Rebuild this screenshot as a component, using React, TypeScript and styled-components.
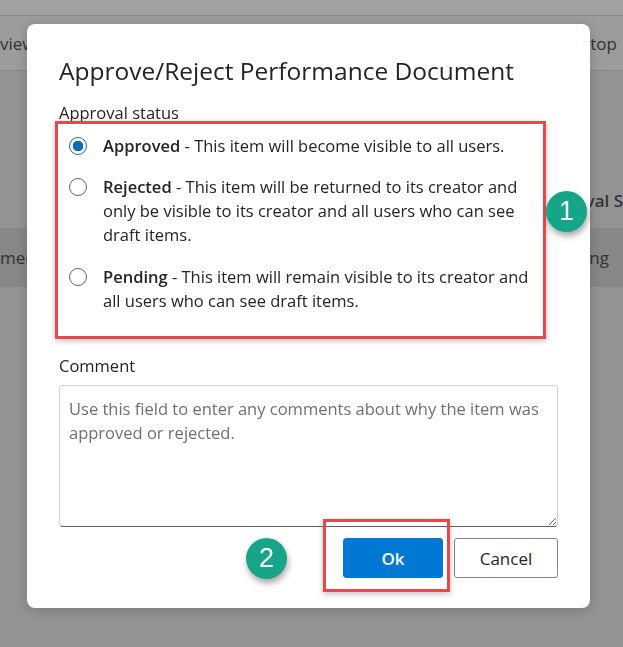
import styled, { createGlobalStyle } from "styled-components";

const GlobalStyle = createGlobalStyle`
  html, body {
    margin: 0;
    padding: 0;
    height: 100%;
  }
  body {
    font-family: "Open Sans", "Noto Sans", "Liberation Sans", sans-serif;
    background: #939393;
    color: #242424;
    overflow: hidden;
  }
`;

const options = [
  {
    id: "approved",
    label: "Approved",
    text: "This item will become visible to all users.",
  },
  {
    id: "rejected",
    label: "Rejected",
    text: "This item will be returned to its creator and only be visible to its creator and all users who can see draft items.",
  },
  {
    id: "pending",
    label: "Pending",
    text: "This item will remain visible to its creator and all users who can see draft items.",
  },
];

const App = () => {
  return (
    <>
      <GlobalStyle />
      <Page>
        <TopStrip />
        <CommandBar>
          <BgText>view</BgText>
          <BgText>top</BgText>
        </CommandBar>
        <ListHeader>
          <BgText $bold>oval S</BgText>
        </ListHeader>
        <ListRow>
          <BgText>ment</BgText>
          <BgText>ng</BgText>
        </ListRow>
      </Page>

      <Overlay>
        <Dialog>
          <Title>Approve/Reject Performance Document</Title>
          <FieldLabel>Approval status</FieldLabel>
          <RadioGroup>
            {options.map((opt) => (
              <Option key={opt.id}>
                <Radio $checked={opt.id === "approved"} />
                <OptionText>
                  <strong>{opt.label}</strong> - {opt.text}
                </OptionText>
              </Option>
            ))}
          </RadioGroup>
          <FieldLabel $top={15}>Comment</FieldLabel>
          <CommentBox placeholder="Use this field to enter any comments about why the item was approved or rejected." />
          <Actions>
            <HighlightWrap>
              <Highlight />
              <PrimaryButton>Ok</PrimaryButton>
            </HighlightWrap>
            <SecondaryButton>Cancel</SecondaryButton>
          </Actions>
          <Badge $x={519} $y={167}>1</Badge>
          <Badge $x={219} $y={514}>2</Badge>
        </Dialog>
      </Overlay>
    </>
  );
};

const Page = styled.div`
  height: 100vh;
  display: flex;
  flex-direction: column;
  background: #939393;
`;

const TopStrip = styled.div`
  height: 15px;
  background: #a1a1a1;
  border-bottom: 1px solid #8b8b8b;
`;

const CommandBar = styled.div`
  height: 54px;
  background: #9c9c9c;
  border-bottom: 1px solid #888888;
  display: flex;
  justify-content: space-between;
  align-items: center;
  padding: 0 6px 0 0;
`;

const ListHeader = styled.div`
  margin-top: 114px;
  height: 30px;
  display: flex;
  justify-content: flex-end;
  align-items: center;
`;

const ListRow = styled.div`
  margin-top: 13px;
  height: 59px;
  background: #878787;
  display: flex;
  justify-content: space-between;
  align-items: center;
  padding-right: 14px;
`;

const BgText = styled.span<{ $bold?: boolean }>`
  font-size: 17px;
  color: #333333;
  font-weight: ${(p) => (p.$bold ? 600 : 400)};
  white-space: nowrap;
`;

const Overlay = styled.div`
  position: fixed;
  inset: 0;
  padding: 24px 0 0 27px;
`;

const Dialog = styled.div`
  position: relative;
  box-sizing: border-box;
  width: 563px;
  height: 584px;
  background: #ffffff;
  border-radius: 8px;
  padding: 31px 32px 30px;
  display: flex;
  flex-direction: column;
  box-shadow: 0 2px 12px rgba(0, 0, 0, 0.18);
`;

const Title = styled.h1`
  margin: 0;
  font-size: 24.5px;
  line-height: 32px;
  font-weight: 500;
  color: #242424;
`;

const FieldLabel = styled.div<{ $top?: number }>`
  margin-top: ${(p) => p.$top ?? 14}px;
  font-size: 16.5px;
  line-height: 24px;
  color: #242424;
`;

const RadioGroup = styled.div`
  margin: -4px 0 0 -4px;
  width: 491px;
  box-sizing: border-box;
  border: 3px solid #e5484d;
  box-shadow: 0 2px 6px rgba(0, 0, 0, 0.25);
  padding: 10px 8px 23px 8px;
  display: flex;
  flex-direction: column;
  gap: 17px;
  position: relative;
  z-index: 1;
`;

const Option = styled.label`
  display: flex;
  align-items: flex-start;
  gap: 16px;

  & + & + & {
    margin-top: 1px;
  }
`;

const Radio = styled.span<{ $checked: boolean }>`
  flex: none;
  width: 18px;
  height: 18px;
  margin: 3px 0 0 3px;
  box-sizing: border-box;
  border-radius: 50%;
  border: 1px solid ${(p) => (p.$checked ? "#0f6cbd" : "#616161")};
  background: ${(p) =>
    p.$checked
      ? "radial-gradient(circle, #0f6cbd 0 5px, #ffffff 5.5px)"
      : "#ffffff"};
`;

const OptionText = styled.span`
  font-size: 16.5px;
  line-height: 24px;
  color: #242424;

  strong {
    font-weight: 600;
  }
`;

const CommentBox = styled.textarea`
  margin-top: 7px;
  height: 144px;
  box-sizing: border-box;
  width: 100%;
  resize: vertical;
  border: 1px solid #d1d1d1;
  border-bottom-color: #616161;
  border-radius: 4px;
  padding: 11px 9px;
  font-family: inherit;
  font-size: 16.5px;
  line-height: 24px;
  color: #242424;
  outline: none;

  &::placeholder {
    color: #707070;
  }
`;

const Actions = styled.div`
  margin-top: 11px;
  display: flex;
  justify-content: flex-end;
  gap: 11px;
`;

const HighlightWrap = styled.div`
  position: relative;
  display: flex;
`;

const Highlight = styled.span`
  position: absolute;
  top: -19px;
  left: -20px;
  right: -7px;
  bottom: -14px;
  border: 3px solid #e5484d;
  box-shadow: 0 2px 6px rgba(0, 0, 0, 0.25);
  pointer-events: none;
`;

const ButtonBase = styled.button`
  height: 40px;
  box-sizing: border-box;
  border-radius: 3px;
  font-family: inherit;
  font-size: 17px;
  font-weight: 600;
  cursor: pointer;
`;

const PrimaryButton = styled(ButtonBase)`
  width: 100px;
  background: #0078d4;
  border: 1px solid #0078d4;
  color: #ffffff;
`;

const SecondaryButton = styled(ButtonBase)`
  width: 104px;
  background: #ffffff;
  border: 1px solid #8a8886;
  color: #242424;
  font-weight: 500;
`;

const Badge = styled.span<{ $x: number; $y: number }>`
  position: absolute;
  left: ${(p) => p.$x}px;
  top: ${(p) => p.$y}px;
  width: 41px;
  height: 41px;
  border-radius: 50%;
  background: #17a589;
  color: #ffffff;
  font-size: 27px;
  line-height: 41px;
  text-align: center;
  font-family: "Liberation Sans", Arial, sans-serif;
  box-shadow: 1px 4px 6px rgba(0, 0, 0, 0.35);
  z-index: 2;
`;

export default App;
